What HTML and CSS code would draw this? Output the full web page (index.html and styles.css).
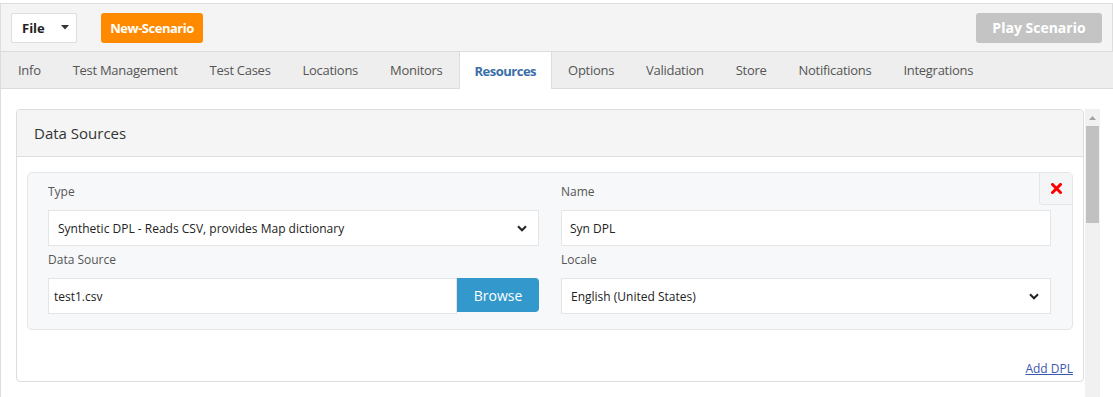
FILE: index.html
```html
<!DOCTYPE html>
<html>
<head>
<meta charset="utf-8">
<link rel="stylesheet" href="styles.css">
</head>
<body>
<div class="app">
  <div class="toolbar">
    <div class="file-btn"><span>File</span><svg class="caret" width="8" height="5" viewBox="0 0 8 5"><path d="M0 0H8L4 4.5Z" fill="#333"/></svg></div>
    <div class="btn-new">New-Scenario</div>
    <div class="btn-play">Play Scenario</div>
  </div>
  <div class="tabs">
    <div class="tab">Info</div>
    <div class="tab">Test Management</div>
    <div class="tab">Test Cases</div>
    <div class="tab">Locations</div>
    <div class="tab">Monitors</div>
    <div class="tab active">Resources</div>
    <div class="tab">Options</div>
    <div class="tab">Validation</div>
    <div class="tab">Store</div>
    <div class="tab">Notifications</div>
    <div class="tab">Integrations</div>
  </div>
  <div class="main">
    <div class="scroll">
      <div class="panel">
        <div class="panel-head">Data Sources</div>
        <div class="panel-body">
          <div class="card">
            <div class="close"><svg width="11" height="11" viewBox="0 0 11 11"><path d="M1.5 1.5L9.5 9.5M9.5 1.5L1.5 9.5" stroke="#f00" stroke-width="3" stroke-linecap="square"/></svg></div>
            <div class="grid">
              <div class="field">
                <div class="label">Type</div>
                <div class="select"><span>Synthetic DPL - Reads CSV, provides Map dictionary</span><svg width="10" height="7" viewBox="0 0 10 7"><path d="M1 1.3L5 5.3L9 1.3" fill="none" stroke="#222" stroke-width="2"/></svg></div>
              </div>
              <div class="field">
                <div class="label">Name</div>
                <div class="input">Syn DPL</div>
              </div>
              <div class="field">
                <div class="label">Data Source</div>
                <div class="input-group">
                  <div class="input grow">test1.csv</div>
                  <div class="btn-browse">Browse</div>
                </div>
              </div>
              <div class="field">
                <div class="label">Locale</div>
                <div class="select"><span>English (United States)</span><svg width="10" height="7" viewBox="0 0 10 7"><path d="M1 1.3L5 5.3L9 1.3" fill="none" stroke="#222" stroke-width="2"/></svg></div>
              </div>
            </div>
          </div>
          <div class="add-row"><a class="add-link" href="#">Add DPL</a></div>
        </div>
      </div>
      <div class="scrollbar">
        <svg class="sb-arrow" width="15" height="14" viewBox="0 0 15 14"><path d="M4 9H11L7.5 5Z" fill="#a3a3a3"/></svg>
        <div class="sb-thumb"></div>
      </div>
    </div>
  </div>
</div>
</body>
</html>
```
FILE: styles.css
```css
* { box-sizing: border-box; }
html, body { margin: 0; padding: 0; background: #fff; }
body {
  font-family: "Open Sans", "Liberation Sans", sans-serif;
  color: #333;
  width: 1113px;
  height: 397px;
  overflow: hidden;
}
.app { padding-top: 3px; }
.toolbar {
  height: 49px;
  background: #f4f4f4;
  border: 1px solid #ddd;
  border-bottom: 1px solid #dcdcdc;
  display: flex;
  align-items: center;
  padding: 0 10px 0 10px;
}
.file-btn {
  width: 66px;
  height: 30px;
  background: #fff;
  border: 1px solid #ddd;
  border-radius: 2px;
  display: flex;
  align-items: center;
  padding-left: 10px;
  font-size: 13px;
  font-weight: 700;
  color: #222;
}
.file-btn .caret { margin-left: 16px; }
.btn-new {
  margin-left: 24px;
  width: 102px;
  height: 30px;
  background: #ff8a00;
  border-radius: 3px;
  color: #fff;
  font-size: 13px;
  font-weight: 700;
  display: flex;
  align-items: center;
  justify-content: center;
  letter-spacing: -0.5px;
}
.btn-play {
  margin-left: auto;
  width: 126px;
  height: 30px;
  background: #c4c4c4;
  border-radius: 3px;
  color: #fff;
  font-size: 14px;
  font-weight: 700;
  display: flex;
  align-items: center;
  justify-content: center;
}
.tabs {
  height: 37px;
  background: #eeeeee;
  border-bottom: 1px solid #dcdcdc;
  border-left: 1px solid #ddd;
  display: flex;
  padding-left: 1px;
}
.tab {
  height: 36px;
  padding: 0 16px;
  font-size: 13px;
  color: #555;
  display: flex;
  align-items: center;
  letter-spacing: -0.28px;
}
.tab.active {
  background: #fff;
  height: 37px;
  border-left: 1px solid #ddd;
  border-right: 1px solid #ddd;
  padding: 0 15px;
  color: #3a6ea8;
  font-weight: 700;
  letter-spacing: -0.5px;
}
.main {
  border-left: 1px solid #ddd;
  padding: 20px 0 0 15px;
  height: 310px;
}
.scroll {
  display: flex;
  align-items: flex-start;
  width: 1084px;
}
.panel {
  width: 1068px;
  border: 1px solid #ddd;
  border-radius: 4px;
  background: #fff;
  flex: none;
}
.panel-head {
  height: 47px;
  background: #f5f5f5;
  border-bottom: 1px solid #ddd;
  border-radius: 4px 4px 0 0;
  padding: 0 17px;
  display: flex;
  align-items: center;
  font-size: 15px;
  color: #333;
}
.panel-body {
  padding: 15px 10px 4px 10px;
}
.card {
  position: relative;
  background: #f7f8fa;
  border: 1px solid #e5e6e8;
  border-radius: 5px;
  padding: 8px 20px 15px 20px;
}
.close {
  position: absolute;
  top: 0;
  right: 0;
  width: 33px;
  height: 32px;
  background: #f4f5f7;
  border-left: 1px solid #e5e6e8;
  border-bottom: 1px solid #e5e6e8;
  border-radius: 0 4px 0 4px;
  display: flex;
  align-items: center;
  justify-content: center;
}
.grid {
  display: grid;
  grid-template-columns: 491px 490px;
  column-gap: 22px;
  row-gap: 3px;
}
.label {
  height: 20px;
  margin-bottom: 9px;
  font-size: 12px;
  color: #555;
  display: flex;
  align-items: center;
}
.select, .input {
  height: 36px;
  background: #fff;
  border: 1px solid #e4e5e7;
  font-size: 12px;
  color: #222;
  display: flex;
  align-items: center;
}
.select {
  padding: 0 11px 0 9px;
  justify-content: space-between;
}
.input { padding: 0 8px; }
.input-group { display: flex; }
.input.grow { flex: 1; padding-left: 5px; }
.btn-browse {
  width: 82px;
  height: 34px;
  background: #3399cc;
  border-radius: 0 4px 4px 0;
  color: #fff;
  font-size: 14px;
  display: flex;
  align-items: center;
  justify-content: center;
}
.add-row {
  margin-top: 31px;
  display: flex;
  justify-content: flex-end;
  height: 16px;
  line-height: 16px;
}
.add-link {
  font-size: 12px;
  color: #3b57b0;
  text-decoration: underline;
}
.scrollbar {
  margin-left: 1px;
  width: 15px;
  height: 300px;
  background: #f1f1f1;
  flex: none;
  display: flex;
  flex-direction: column;
  align-items: center;
}
.sb-arrow { display: block; margin-top: 2px; }
.sb-thumb {
  width: 13px;
  height: 97px;
  background: #c1c1c1;
  margin-top: 1px;
}
```
